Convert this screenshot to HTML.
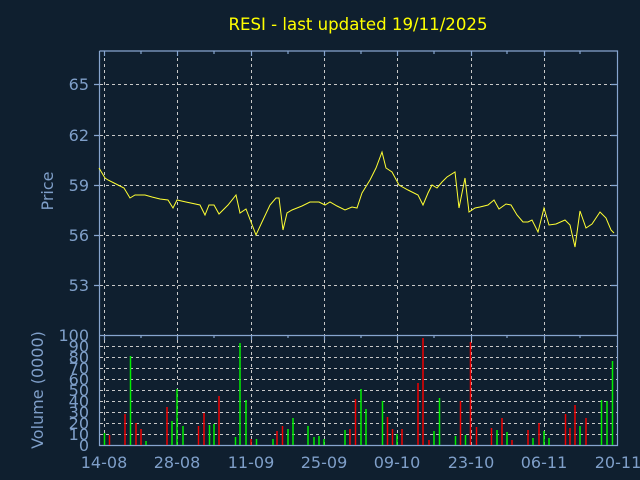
<!DOCTYPE html>
<html><head><style>
html,body{margin:0;padding:0;background:#0f1f2f;}
svg{display:block;}
text{font-family:"DejaVu Sans","Liberation Sans",sans-serif;}
</style></head><body>
<svg width="640" height="480" viewBox="0 0 640 480" xmlns="http://www.w3.org/2000/svg">
<rect width="640" height="480" fill="#0f1f2f"/>
<text x="358" y="30" fill="#ffff00" font-size="16.6" text-anchor="middle">RESI - last updated 19/11/2025</text>
<g stroke="#c8c8c8" stroke-width="1" stroke-dasharray="3,3" fill="none">
<path d="M100 84.5H617M100 135.5H617M100 185.5H617M100 235.5H617M100 285.5H617"/>
<path d="M104.5 52V445M177.5 52V445M251.5 52V445M324.5 52V445M397.5 52V445M471.5 52V445M544.5 52V445"/>
<path d="M100 346.5H617M100 357.5H617M100 368.5H617M100 379.5H617M100 390.5H617M100 401.5H617M100 412.5H617M100 423.5H617M100 434.5H617"/>
</g>
<g stroke="#87a5cf" stroke-width="1.2" fill="none">
<path d="M99.5 51V445.5H617.5V51H99.5"/>
<path d="M99.5 335.5H617.5"/>
<path d="M94 84.5H100M94 135.5H100M94 185.5H100M94 235.5H100M94 285.5H100"/>
<path d="M611 84.5H617M611 135.5H617M611 185.5H617M611 235.5H617M611 285.5H617"/>
<path d="M104.5 51V56M177.5 51V56M251.5 51V56M324.5 51V56M397.5 51V56M471.5 51V56M544.5 51V56M141 51V54M214 51V54M288 51V54M361 51V54M434 51V54M507 51V54M580 51V54"/>
<path d="M104.5 335V340M177.5 335V340M251.5 335V340M324.5 335V340M397.5 335V340M471.5 335V340M544.5 335V340M141 335V338M214 335V338M288 335V338M361 335V338M434 335V338M507 335V338M580 335V338"/>
</g>
<polyline fill="none" stroke="#ffff33" stroke-width="1" points="99,168 105,178 108,180 118,185 124,188 130,198 135,195 145,195 152,197 160,199 168,200 173,208 177,200 186,202 200,205 205,215 209,205 214,205 219,214 228,205 236,195 240,213 246,209 251,222 256,235 262,222 270,205 276,198 279,198 283,230 287,213 292,210 302,206 310,202 319,202 325,205 330,202 337,206 345,210 352,207 357,208 362,193 370,180 376,168 382,152 386,168 392,172 399,185 408,190 418,195 423,205 428,193 432,185 437,188 442,182 447,177 455,172 459,208 465,178 469,212 475,208 480,207 488,205 494,200 499,209 506,204 511,205 517,215 523,222 528,222 532,220 538,232 544,208 549,225 556,224 565,220 570,225 575,247 580,211 586,228 592,224 600,212 606,218 611,230 614,233"/>
<g stroke-width="1.5">
<g stroke="#00ee00">
<path d="M104.5 445V433M130.5 445V356M146 445V441M172 445V421M177 445V389M183 445V426M209.5 445V425M214 445V424M235.5 445V437M240 445V343M246 445V400M256.5 445V439M273 445V439M288 445V429M293 445V418M308 445V426M314 445V437M319 445V436M324 445V439M345 445V430M361 445V389M366 445V409M382.5 445V401M397 445V434M434 445V431M439.5 445V398M455.5 445V436M465.5 445V435M497 445V430M507 445V432M533 445V438M544 445V431M549 445V438M580 445V426M601.5 445V400M607 445V401M612.5 445V361"/>
</g>
<g stroke="#ee0000">
<path d="M109.5 445V435M125 445V414M136 445V423M141 445V429M167 445V407M198.5 445V426M204 445V413M219 445V396M251 445V439M277 445V431M282.5 445V426M350 445V429M355.5 445V399M387.5 445V417M392.5 445V429M402 445V429M418 445V383M423 445V338M429 445V440M460.5 445V401M470.5 445V342M476.5 445V427M491.5 445V428M502 445V418M512 445V440M528 445V430M539 445V423M565.5 445V414M570 445V428M575 445V405M586 445V418"/>
</g>
</g>
<g fill="#7f9fc9" font-size="16" text-anchor="end">
<text x="89" y="90">65</text>
<text x="89" y="141">62</text>
<text x="89" y="191">59</text>
<text x="89" y="241">56</text>
<text x="89" y="291">53</text>
<text x="89" y="341">100</text>
<text x="89" y="352">90</text>
<text x="89" y="363">80</text>
<text x="89" y="374">70</text>
<text x="89" y="385">60</text>
<text x="89" y="396">50</text>
<text x="89" y="407">40</text>
<text x="89" y="418">30</text>
<text x="89" y="429">20</text>
<text x="89" y="440">10</text>
<text x="89" y="451">0</text>
</g>
<g fill="#7f9fc9" font-size="16" text-anchor="middle">
<text x="104" y="468">14-08</text>
<text x="177" y="468">28-08</text>
<text x="251" y="468">11-09</text>
<text x="324" y="468">25-09</text>
<text x="397" y="468">09-10</text>
<text x="471" y="468">23-10</text>
<text x="544" y="468">06-11</text>
<text x="618" y="468">20-11</text>
<text transform="translate(53,191) rotate(-90)">Price</text>
<text transform="translate(43,390) rotate(-90)">Volume (0000)</text>
</g>
</svg>
</body></html>
